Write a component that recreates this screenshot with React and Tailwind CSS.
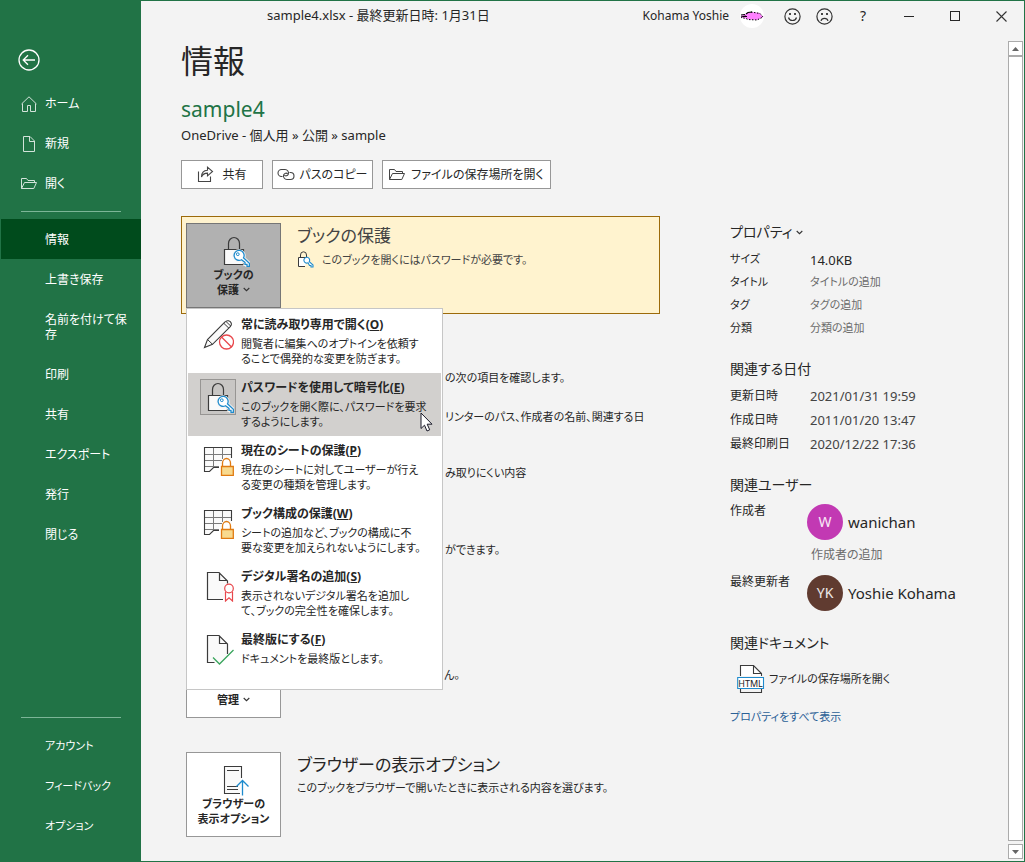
import React from "react";

/* ---------- icons ---------- */

function BackIcon() {
  return (
    <svg width="22" height="22" viewBox="0 0 22 22" fill="none" stroke="#fff" strokeWidth="1.3" aria-hidden="true">
      <circle cx="11" cy="11" r="10" />
      <path d="M5.5 11H17M10 6.2L5.2 11l4.800 4.800" />
    </svg>
  );
}

function HomeIcon() {
  return (
    <svg width="16" height="16" viewBox="0 0 16 16" fill="none" stroke="#d3e3da" strokeWidth="1" aria-hidden="true">
      <path d="M.5 8L8 .8 15.500 8M1.500 7.500V15.500H6.500V9.500H9.500V15.500H14.500V7.500" />
    </svg>
  );
}

function NewIcon() {
  return (
    <svg width="16" height="16" viewBox="0 0 16 16" fill="none" stroke="#d3e3da" strokeWidth="1" aria-hidden="true">
      <path d="M2.500.5H9L13.500 5V15.500H2.500ZM8.500.5V5.500H13.500" />
    </svg>
  );
}

function FolderIcon({ color }) {
  return (
    <svg width="16" height="14" viewBox="0 0 16 14" fill="none" stroke={color} strokeWidth="1" aria-hidden="true">
      <path d="M.5 11.500V1.500H5.500L7 3.500H13.500V5.500M.5 11.500L3.500 5.500H15.500L12.800 11.500Z" />
    </svg>
  );
}

function ShareIcon() {
  return (
    <svg width="17" height="17" viewBox="0 0 17 17" fill="none" stroke="#444" strokeWidth="1.1" aria-hidden="true">
      <path d="M1.500 5.500V15.500H13.500V10.500" />
      <path d="M4.500 11C4.500 6.800 6.500 4.500 10.500 4.300V1.200L15.500 5.500 10.500 9.800V7.100C7.500 7.100 5.500 8.300 4.500 11Z" />
    </svg>
  );
}

function LinkIcon() {
  return (
    <svg width="18" height="14" viewBox="0 0 18 14" fill="none" stroke="#444" strokeWidth="1.1" aria-hidden="true">
      <path d="M5.500 8.500H4.500A3.500 3.500 0 0 1 4.500 1.500H8A3.500 3.500 0 0 1 11.300 6.200C10.500 8 8.500 8.300 7.300 7.200" />
      <path d="M12.500 4.500H13.500A3.500 3.500 0 0 1 13.500 11.500H10A3.500 3.500 0 0 1 6.700 6.800C7.500 5 9.500 4.700 10.700 5.800" />
    </svg>
  );
}

function Chevron() {
  return (
    <svg width="7" height="5" viewBox="0 0 7 5" fill="none" stroke="#333" strokeWidth="1.1" className="shrink-0" aria-hidden="true">
      <path d="M.7 1L3.500 3.700 6.300 1" />
    </svg>
  );
}

function LockKeyIcon() {
  return (
    <svg width="32" height="32" viewBox="0 0 32 32" fill="none" aria-hidden="true">
      <path d="M10.500 14.500V8.500A5.500 6 0 0 1 21.500 8.500V14.500" stroke="#3b3b3b" strokeWidth="1.2" />
      <path d="M6.500 14.500H25.500V29.500H6.500Z" fill="#fafafa" stroke="#3b3b3b" strokeWidth="1.2" />
      <path
        d="M24 24.800A5 5 0 1 1 25.500 23L31.500 28.500V31.500H29V29.500H27V27.500Z"
        fill="#fff"
        stroke="#f4f4f4"
        strokeWidth="3.200"
      />
      <path
        d="M23.500 24.800A5 5 0 1 1 25.500 22.800L31.400 28.300V31.400H29V29.400H27V27.400Z"
        fill="#fff"
        stroke="#1e8bcd"
        strokeWidth="1.300"
      />
      <circle cx="19.800" cy="19.200" r="1.400" stroke="#1e8bcd" strokeWidth="1" />
    </svg>
  );
}

function SmallLockKeyIcon() {
  return (
    <svg width="17" height="17" viewBox="0 0 17 17" fill="none" aria-hidden="true">
      <path d="M3.500 6.500V4A3 3.200 0 0 1 9.500 4V6.500" stroke="#3b3b3b" />
      <path d="M10.500 6.500H1.500V15.500H8" fill="#fff" stroke="#3b3b3b" />
      <path d="M11 11.800A2.900 2.900 0 1 1 12.300 10.600L16 14V16H14V14.500H12.500Z" fill="#fff" stroke="#1e8bcd" strokeWidth="1.100" />
    </svg>
  );
}

function PencilIcon() {
  return (
    <svg width="32" height="32" viewBox="0 0 32 32" fill="none" aria-hidden="true">
      <path d="M2.500 29.500L5.500 21.500 23 4C25 1.500 28.500 3 29.300 5.200 29.700 6.500 29.300 7.800 28.300 8.700L10.500 26.300Z" fill="#fafafa" stroke="#3b3b3b" strokeWidth="1.100" />
      <path d="M5.500 21.500L10.500 26.300M22 5.500L27 10.300M24 3.500L29 8.300" stroke="#3b3b3b" strokeWidth="1" />
      <circle cx="24.500" cy="24" r="7" fill="#fff" stroke="#e8474c" strokeWidth="1.300" />
      <path d="M19.500 19L29.500 29" stroke="#e8474c" strokeWidth="1.300" />
    </svg>
  );
}

function SheetLockIcon() {
  return (
    <svg width="32" height="32" viewBox="0 0 32 32" fill="none" aria-hidden="true">
      <path d="M2.500 3.500H29.500V20H17V22.500H12L8 27.500H2.500Z" fill="#fafafa" />
      <path d="M2.500 10.500H29M2.500 16.500H20M2.500 22.500H17M11.500 3.500V24M20.500 3.500V15" stroke="#7a7a7a" />
      <path d="M29.500 14V3.500H2.500V27.500H7.500L11.500 23.500H17" stroke="#3b3b3b" strokeWidth="1.100" />
      <path d="M20.500 22V19A4 4.500 0 0 1 28.500 19V22" fill="#fff" stroke="#e07b12" strokeWidth="1.300" />
      <path d="M19.500 22.500H31.300V31.300H19.500Z" fill="#f8da8f" stroke="#e07b12" strokeWidth="1.300" />
    </svg>
  );
}

function SignatureIcon() {
  return (
    <svg width="32" height="32" viewBox="0 0 32 32" fill="none" aria-hidden="true">
      <path d="M21.500 29.500H5.500V2.500H17L25.500 11V13" fill="#fafafa" />
      <path d="M21 29.500H5.500V2.500H17L25.500 11V13.500M17.500 2.500V10.500H25.500" stroke="#3b3b3b" strokeWidth="1.200" />
      <circle cx="27" cy="18.500" r="4.300" fill="#fff" stroke="#e8474c" strokeWidth="1.200" />
      <path d="M23.500 22V31L27 27.800 30.500 31V22" stroke="#e8474c" strokeWidth="1.200" />
    </svg>
  );
}

function FinalIcon() {
  return (
    <svg width="32" height="32" viewBox="0 0 32 32" fill="none" aria-hidden="true">
      <path d="M5.500 2.500H17L25.500 11V22L18 29.500H5.500Z" fill="#fafafa" />
      <path d="M12.500 29.500H5.500V2.500H17L25.500 11V21M17.500 2.500V10.500H25.500" stroke="#3b3b3b" strokeWidth="1.200" />
      <path d="M11 24.500L17.500 31 31.500 17" stroke="#3aa55d" strokeWidth="1.300" />
    </svg>
  );
}

function BrowserIcon() {
  return (
    <svg width="32" height="32" viewBox="-2 0 32 32" fill="none" aria-hidden="true">
      <path d="M19 29.500H4.500V2.500H21.500V14" fill="#fafafa" />
      <path d="M20 29.500H4.500V2.500H21.500V14M7 6.500H19M7 22.500H18M7 25.500H18" stroke="#3b3b3b" strokeWidth="1.100" />
      <path d="M22.500 31.500V17M16.500 22.500L22.500 16.500 28.500 22.500" stroke="#1e8bcd" strokeWidth="1.300" />
    </svg>
  );
}

function HtmlIcon() {
  return (
    <svg width="28" height="28" viewBox="0 0 28 28" fill="none" aria-hidden="true">
      <path d="M3.500 11V.5H16.500L24.500 8.500V11" fill="#fff" />
      <path d="M3.500 11V.5H16.500L24.500 8.500V11M16.500.5V8.500H24.500M3.500 24V27.500H24.500V24" stroke="#3b3b3b" strokeWidth="1.100" />
      <path d="M.7 12.500H26.500V23.500H.7Z" fill="#fff" stroke="#1e8bcd" strokeWidth="1.100" />
      <text x="13.500" y="21.500" textAnchor="middle" fontSize="9" fontFamily="Noto Sans, sans-serif" fill="#222">
        HTML
      </text>
    </svg>
  );
}

function FaceIcon({ sad }) {
  return (
    <svg width="17" height="17" viewBox="0 0 17 17" fill="none" stroke="#333" strokeWidth="1.200" aria-hidden="true">
      <circle cx="8.500" cy="8.500" r="7.600" />
      <path d={sad ? "M5 12.800C5.800 9.500 11.200 9.500 12 12.800" : "M4.500 9.500C5.500 13.500 11.500 13.500 12.500 9.500"} />
      <path d="M6 5V7M11 5V7" strokeWidth="1.800" />
    </svg>
  );
}

function ProfilePicture() {
  return (
    <svg width="24" height="24" viewBox="0 0 24 24" aria-hidden="true">
      <circle cx="12" cy="12" r="12" fill="#fff" />
      <path d="M1 12L6 10 8 8.500 12 8 20 9 21 11 23.500 13 20 14.500 17 16 9 15.500 6 14.500 1 13Z" fill="#ff80ff" />
      <path d="M1 13L6 12M1 11L5 10.500M4 12.500H7M6 10L8 8.500 12 8" fill="none" stroke="#000" strokeWidth="1.200" />
      <path d="M11 8L20 9.500L23 13L17 16L8 15.500L6 14.500L1 13.500" fill="none" stroke="#000" strokeWidth="1" strokeDasharray="1.500 1.500" />
    </svg>
  );
}

function Pointer() {
  return (
    <svg width="13" height="20" viewBox="0 0 13 20" aria-hidden="true">
      <path d="M1 1V16.500L4.500 13.200 7 19 9.700 17.800 7.200 12.200H12Z" fill="#fff" stroke="#1b1b2a" strokeWidth="1" />
    </svg>
  );
}

/* ---------- sidebar ---------- */

const topLinks = [
  { label: "ホーム", icon: <HomeIcon /> },
  { label: "新規", icon: <NewIcon /> },
  { label: "開く", icon: <FolderIcon color="#d3e3da" /> },
];
const fileLinks = [
  ["情報"],
  ["上書き保存"],
  ["名前を付けて保", "存"],
  ["印刷"],
  ["共有"],
  ["エクスポート"],
  ["発行"],
  ["閉じる"],
];
const bottomLinks = ["アカウント", "フィードバック", "オプション"];

function Sidebar() {
  return (
    <nav className="flex w-[140px] shrink-0 flex-col bg-[#217346] text-white">
      <button aria-label="戻る" className="mt-12 ml-[17px] size-[22px]">
        <BackIcon />
      </button>
      <div className="mt-[13px] flex flex-col">
        {topLinks.map((l) => (
          <a key={l.label} href="#" className="flex h-10 items-center gap-2 pl-5">
            <span className="flex w-4 justify-center">{l.icon}</span>
            {l.label}
          </a>
        ))}
      </div>
      <hr className="mx-5 my-[7px] border-[#7cb597]" />
      {fileLinks.map((lines, i) => (
        <a
          key={lines[0]}
          href="#"
          className={`block pt-[13px] pb-3 pl-11 leading-[15px] whitespace-nowrap ${i === 0 ? "bg-[#004b1c]" : ""}`}
        >
          {lines.map((t) => (
            <span key={t} className="block">{t}</span>
          ))}
        </a>
      ))}
      <hr className="mx-5 mt-auto mb-2 border-[#7cb597]" />
      <div className="mb-[15px] flex flex-col text-[11px]">
        {bottomLinks.map((l) => (
          <a key={l} href="#" className="flex h-10 items-center pl-11">
            {l}
          </a>
        ))}
      </div>
    </nav>
  );
}

/* ---------- title bar ---------- */

function TitleBar() {
  return (
    <header className="flex h-[30px] shrink-0 items-center text-[#262626]">
      <div className="flex-1 pl-[126px] text-[13px] whitespace-nowrap">sample4.xlsx - 最終更新日時: 1月31日</div>
      <span className="mr-[11px]">Kohama Yoshie</span>
      <ProfilePicture />
      <div className="ml-3 flex h-full">
        <button aria-label="笑顔" className="flex w-8 items-center justify-center">
          <FaceIcon />
        </button>
        <button aria-label="不満" className="flex w-8 items-center justify-center">
          <FaceIcon sad />
        </button>
        <button aria-label="ヘルプ" className="w-[46px] text-sm">
          ?
        </button>
        <button aria-label="最小化" className="flex w-[46px] items-center justify-center">
          <span className="h-px w-[10px] bg-[#262626]" />
        </button>
        <button aria-label="最大化" className="flex w-[46px] items-center justify-center">
          <span className="size-[10px] border border-[#262626]" />
        </button>
        <button aria-label="閉じる" className="flex w-[46px] items-center justify-center">
          <svg width="11" height="11" viewBox="0 0 11 11" stroke="#333" strokeWidth="1.100" aria-hidden="true">
            <path d="M.5.5L10.500 10.500M10.500.5L.5 10.500" />
          </svg>
        </button>
      </div>
    </header>
  );
}

/* ---------- protect menu ---------- */

const menuItems = [
  { title: "常に読み取り専用で開く", k: "O", lines: ["閲覧者に編集へのオプトインを依頼す", "ることで偶発的な変更を防ぎます。"], icon: <PencilIcon /> },
  { title: "パスワードを使用して暗号化", k: "E", lines: ["このブックを開く際に、パスワードを要求", "するようにします。"], icon: <LockKeyIcon />, active: true },
  { title: "現在のシートの保護", k: "P", lines: ["現在のシートに対してユーザーが行え", "る変更の種類を管理します。"], icon: <SheetLockIcon /> },
  { title: "ブック構成の保護", k: "W", lines: ["シートの追加など、ブックの構成に不", "要な変更を加えられないようにします。"], icon: <SheetLockIcon /> },
  { title: "デジタル署名の追加", k: "S", lines: ["表示されないデジタル署名を追加し", "て、ブックの完全性を確保します。"], icon: <SignatureIcon /> },
  { title: "最終版にする", k: "F", lines: ["ドキュメントを最終版とします。"], icon: <FinalIcon /> },
];

function ProtectMenu() {
  return (
    <div role="menu" className="absolute top-full left-0 z-10 w-[257px] border border-[#c6c6c6] bg-white p-px text-left text-[#262626]">
      {menuItems.map((m) => (
        <button
          key={m.k}
          role="menuitem"
          className={`flex h-[63px] w-full gap-[5px] pt-[6px] pl-3 text-left ${m.active ? "bg-[#d2d0ce]" : ""}`}
        >
          <span
            className={`flex size-9 shrink-0 items-center justify-center border ${
              m.active ? "border-[#979593] bg-[#c8c6c4]" : "border-transparent"
            }`}
          >
            {m.icon}
          </span>
          <span className="block whitespace-nowrap">
            <span className="block leading-[18px] font-bold">
              {m.title}(<u>{m.k}</u>)
            </span>
            <span className="mt-[2px] block text-[11px] leading-[15px]">
              {m.lines.map((t) => (
                <span key={t} className="block">{t}</span>
              ))}
            </span>
          </span>
        </button>
      ))}
      <span className="pointer-events-none absolute top-[103px] left-[233px]">
        <Pointer />
      </span>
    </div>
  );
}

/* ---------- main column ---------- */

function Tile({ icon, lines, chevron, pressed }) {
  return (
    <button
      className={`flex h-[85px] w-[95px] shrink-0 flex-col items-center justify-end border pb-[10px] text-[11px] leading-[15px] font-bold ${
        pressed ? "border-[#767676] bg-[#b1b1b1]" : "border-[#979797] bg-white"
      }`}
    >
      {icon}
      {lines.map((l, i) => (
        <span key={l} className="flex items-center gap-1 whitespace-nowrap">
          {l}
          {chevron && i === lines.length - 1 && <Chevron />}
        </span>
      ))}
    </button>
  );
}

function ActionButton({ icon, children, className }) {
  return (
    <button className={`flex h-[29px] items-center justify-center border border-[#979797] bg-white whitespace-nowrap ${className}`}>
      {icon}
      {children}
    </button>
  );
}

function InfoColumn() {
  return (
    <div className="flex w-[479px] shrink-0 flex-col">
      <section className="flex gap-4 border border-[#9c6a0a] bg-[#fff3cf] pt-[6px] pb-[5px] pl-1 text-[#444]">
        <div className="relative text-[#262626]">
          <Tile pressed chevron icon={<LockKeyIcon />} lines={["ブックの", "保護"]} />
          <ProtectMenu />
        </div>
        <div>
          <h3 className="text-[17px] leading-[26px]">ブックの保護</h3>
          <p className="mt-[2px] flex items-center gap-2 text-[11px] leading-4">
            <SmallLockKeyIcon />
            このブックを開くにはパスワードが必要です。
          </p>
        </div>
      </section>

      <section className="flex h-[200px] flex-col pt-14 pl-[264px] text-[11px] leading-4 whitespace-nowrap">
        <p>の次の項目を確認します。</p>
        <ul className="mt-[23px] flex flex-col gap-10">
          <li>リンターのパス、作成者の名前、関連する日</li>
          <li>み取りにくい内容</li>
        </ul>
      </section>

      <section className="h-[119px] pt-7 pl-[264px] text-[11px] leading-4 whitespace-nowrap">
        <p>ができます。</p>
      </section>

      <section className="flex h-[119px] gap-[163px] pl-[5px] text-[11px] leading-4">
        <Tile chevron lines={["管理"]} />
        <p className="pt-[34px]">ん。</p>
      </section>

      <section className="flex gap-4 pl-[5px]">
        <Tile icon={<BrowserIcon />} lines={["ブラウザーの", "表示オプション"]} />
        <div className="whitespace-nowrap">
          <h3 className="text-[17px] leading-[26px]">ブラウザーの表示オプション</h3>
          <p className="mt-[2px] text-[11px] leading-4">このブックをブラウザーで開いたときに表示される内容を選びます。</p>
        </div>
      </section>
    </div>
  );
}

/* ---------- properties column ---------- */

const properties = [
  ["サイズ", "14.0KB"],
  ["タイトル", "タイトルの追加"],
  ["タグ", "タグの追加"],
  ["分類", "分類の追加"],
];
const dates = [
  ["更新日時", "2021/01/31 19:59"],
  ["作成日時", "2011/01/20 13:47"],
  ["最終印刷日", "2020/12/22 17:36"],
];

function Person({ initials, name, color }) {
  return (
    <div className="flex items-center gap-[5px]">
      <span className={`flex size-9 items-center justify-center rounded-full text-sm text-white/90 ${color}`}>{initials}</span>
      <span className="text-[15px] whitespace-nowrap">{name}</span>
    </div>
  );
}

function PropertiesColumn() {
  return (
    <aside className="min-w-0 flex-1 pt-1">
      <h4 className="flex items-center gap-1 text-sm leading-6">
        プロパティ <Chevron />
      </h4>
      <table className="mt-1">
        <tbody>
          {properties.map(([k, v], i) => (
            <tr key={k} className="h-[23px]">
              <th scope="row" className="w-20 p-0 text-left text-[11px] font-normal">{k}</th>
              <td className={i === 0 ? "p-0 text-[13px] leading-4" : "p-0 text-[11px] text-[#6b6b6b]"}>{v}</td>
            </tr>
          ))}
        </tbody>
      </table>

      <h4 className="mt-[17px] text-sm leading-6">関連する日付</h4>
      <table className="mt-[3px]">
        <tbody>
          {dates.map(([k, v]) => (
            <tr key={k} className="h-6">
              <th scope="row" className="w-20 p-0 text-left font-normal">{k}</th>
              <td className="p-0 text-[13px] leading-4 text-[#444]">{v}</td>
            </tr>
          ))}
        </tbody>
      </table>

      <h4 className="mt-[17px] text-sm leading-6">関連ユーザー</h4>
      <div className="mt-[7px] flex">
        <span className="w-[77px] shrink-0 leading-[14px]">作成者</span>
        <div>
          <Person initials="W" name="wanichan" color="bg-[#c239b3]" />
          <a href="#" className="mt-[7px] ml-1 block leading-4 text-[#6b6b6b]">作成者の追加</a>
        </div>
      </div>
      <div className="mt-3 flex">
        <span className="w-[77px] shrink-0 leading-[14px]">最終更新者</span>
        <Person initials="YK" name="Yoshie Kohama" color="bg-[#603b30]" />
      </div>

      <h4 className="mt-5 text-sm leading-6">関連ドキュメント</h4>
      <a href="#" className="mt-[10px] ml-[7px] flex items-center gap-1 text-[11px] whitespace-nowrap">
        <HtmlIcon />
        ファイルの保存場所を開く
      </a>
      <a href="#" className="mt-4 inline-block text-[11px] leading-4 text-[#2b6096]">プロパティをすべて表示</a>
    </aside>
  );
}

function ScrollBar() {
  return (
    <div className="mt-[10px] mr-px mb-[2px] flex w-[15px] shrink-0 flex-col" aria-hidden="true">
      <div className="flex h-[15px] items-center justify-center border border-[#ababab] bg-white">
        <svg width="7" height="4" viewBox="0 0 7 4" fill="#666"><path d="M0 4L3.500 0 7 4Z" /></svg>
      </div>
      <div className="mb-[3px] flex-1 border border-[#ababab] bg-white" />
      <div className="flex h-[15px] items-center justify-center border border-[#ababab] bg-white">
        <svg width="7" height="4" viewBox="0 0 7 4" fill="#666"><path d="M0 0L3.500 4 7 0Z" /></svg>
      </div>
    </div>
  );
}

export default function App() {
  return (
    <div className="flex h-screen border border-[#217346] bg-[#f3f3f3] font-['Noto_Sans','Noto_Sans_CJK_JP',sans-serif] text-xs text-[#262626] [font-feature-settings:'palt']">
      <Sidebar />
      <div className="flex min-w-0 flex-1 flex-col">
        <TitleBar />
        <div className="flex min-h-0 flex-1">
          <main className="min-w-0 flex-1 overflow-hidden pt-[10px] pl-10">
            <h1 className="text-[32px] leading-10">情報</h1>
            <h2 className="mt-[14px] text-[21px] leading-7 text-[#217346]">sample4</h2>
            <p className="mt-1 text-[13px] leading-4">OneDrive - 個人用 » 公開 » sample</p>
            <div className="mt-[17px] flex gap-[9px]">
              <ActionButton className="w-[82px] gap-2" icon={<ShareIcon />}>共有</ActionButton>
              <ActionButton className="w-[101px] gap-1" icon={<LinkIcon />}>パスのコピー</ActionButton>
              <ActionButton className="w-[169px] gap-[6px]" icon={<FolderIcon color="#444" />}>ファイルの保存場所を開く</ActionButton>
            </div>
            <div className="mt-[27px] flex gap-[70px]">
              <InfoColumn />
              <PropertiesColumn />
            </div>
          </main>
          <ScrollBar />
        </div>
      </div>
    </div>
  );
}
